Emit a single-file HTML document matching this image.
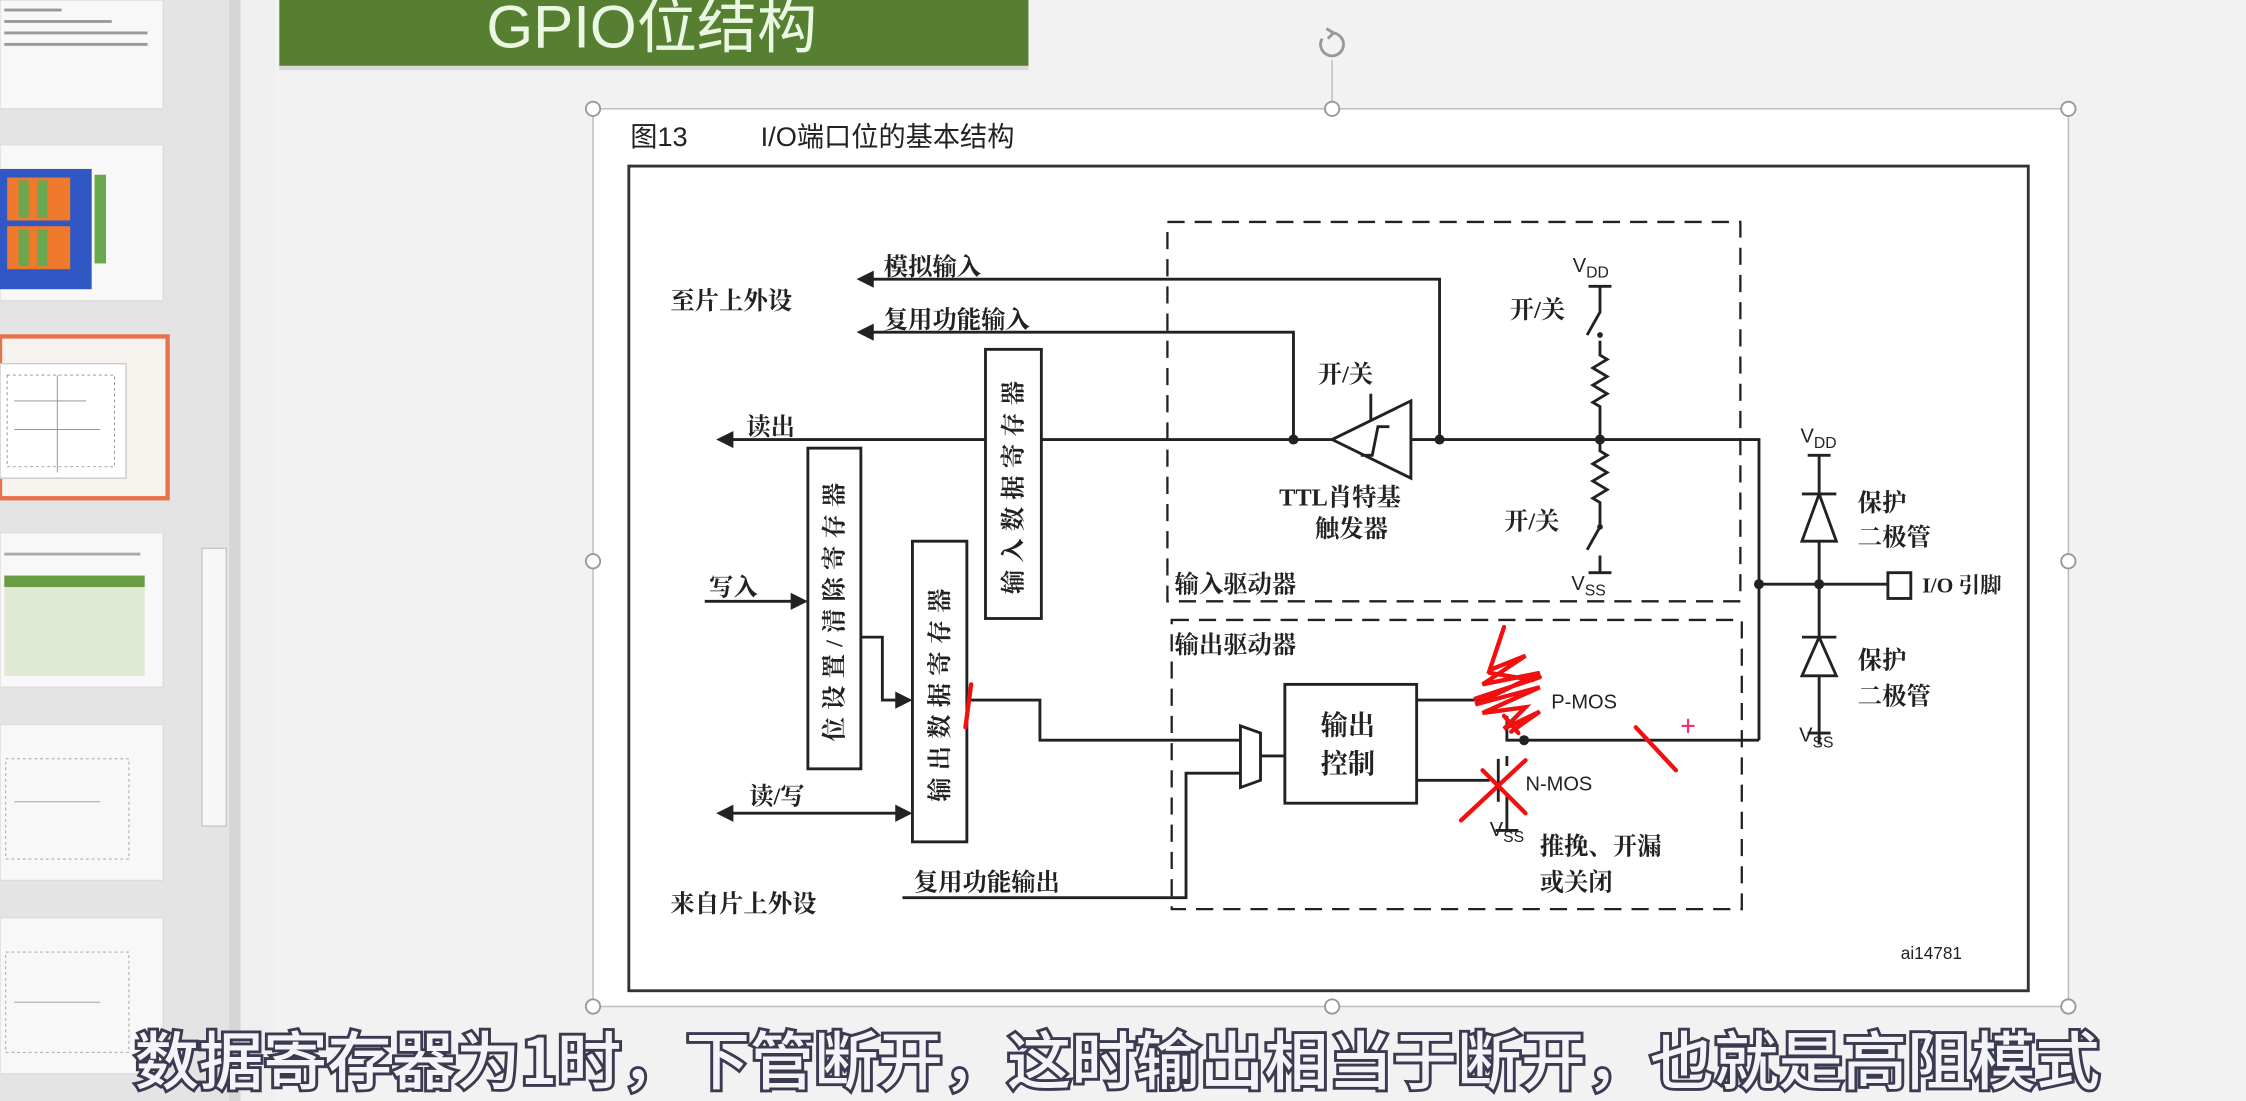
<!DOCTYPE html>
<html><head><meta charset="utf-8"><style>
html,body{margin:0;padding:0;width:2246px;height:1101px;overflow:hidden;background:#ececec}
svg{display:block}
.d{font-family:"Liberation Serif","Noto Serif CJK SC",serif;fill:#222}
.s{font-family:"Liberation Sans","Noto Sans CJK SC",sans-serif;fill:#222}
</style></head><body>
<svg width="2246" height="1101" viewBox="0 0 1568 769" preserveAspectRatio="none" xmlns="http://www.w3.org/2000/svg">
<rect x="0" y="0" width="165" height="769" fill="#e4e4e4"/>
<rect x="160" y="0" width="8" height="769" fill="#d6d6d6"/>
<rect x="141" y="383" width="17" height="194" fill="#f7f7f7" stroke="#c8c8c8"/>
<rect x="0" y="0" width="114" height="76" fill="#f8f8f8" stroke="#ddd"/>
<g fill="#999"><rect x="3" y="6" width="40" height="2"/><rect x="3" y="14" width="75" height="2"/><rect x="3" y="22" width="100" height="2"/><rect x="3" y="30" width="100" height="2"/></g>
<rect x="0" y="101" width="114" height="109" fill="#f8f8f8" stroke="#ddd"/>
<rect x="0" y="118" width="64" height="84" fill="#2f58c4"/>
<rect x="5" y="124" width="44" height="30" fill="#f07a2c"/><rect x="5" y="158" width="44" height="30" fill="#f07a2c"/>
<g fill="#6aa84f"><rect x="13" y="126" width="7" height="26"/><rect x="26" y="126" width="7" height="26"/><rect x="13" y="160" width="7" height="26"/><rect x="26" y="160" width="7" height="26"/><rect x="66" y="122" width="8" height="62"/></g>
<rect x="0" y="235" width="117" height="113" fill="#f6f2ee" stroke="#e8704a" stroke-width="3"/>
<rect x="0" y="254" width="88" height="80" fill="#fff" stroke="#ccc"/>
<g stroke="#888" stroke-width="0.6" fill="none"><path d="M5 262H80V326H5Z" stroke-dasharray="2 2"/><path d="M10 280H60M10 300H70M40 262V330"/></g>
<rect x="0" y="372" width="114" height="108" fill="#f8f8f8" stroke="#ddd"/>
<rect x="3" y="402" width="98" height="70" fill="#dfe9d3"/><rect x="3" y="402" width="98" height="8" fill="#6a9c44"/>
<g fill="#aaa"><rect x="3" y="386" width="95" height="2"/></g>
<rect x="0" y="506" width="114" height="109" fill="#f8f8f8" stroke="#ddd"/>
<g stroke="#999" stroke-width="0.6" fill="none"><path d="M4 530H90V600H4Z" stroke-dasharray="2 2"/><path d="M10 560H70"/></g>
<rect x="0" y="641" width="114" height="109" fill="#f8f8f8" stroke="#ddd"/>
<g stroke="#999" stroke-width="0.6" fill="none"><path d="M4 665H90V735H4Z" stroke-dasharray="2 2"/><path d="M10 700H70"/></g>
<rect x="168" y="0" width="1400" height="769" fill="#efefef"/>
<rect x="192" y="0" width="1376" height="769" fill="#f2f2f2"/>
<rect x="195" y="0" width="523" height="46" fill="#577f32"/>
<rect x="195" y="46" width="523" height="3" fill="#d8d8d8"/>
<text x="455" y="33" text-anchor="middle" style="font-family:'Liberation Sans','Noto Sans CJK SC',sans-serif;font-size:42px;fill:#eaf7e2">GPIO位结构</text>
<rect x="414" y="76" width="1030" height="627" fill="#fff" stroke="#bbb" stroke-width="1"/>
<line x1="930" y1="42" x2="930" y2="76" stroke="#bbb"/>
<g fill="#fff" stroke="#999" stroke-width="1.3"><circle cx="414" cy="76" r="5"/><circle cx="930" cy="76" r="5"/><circle cx="1444" cy="76" r="5"/><circle cx="414" cy="392" r="5"/><circle cx="1444" cy="392" r="5"/><circle cx="414" cy="703" r="5"/><circle cx="930" cy="703" r="5"/><circle cx="1444" cy="703" r="5"/></g>
<path d="M923 27a8 8 0 1 0 7-4" fill="none" stroke="#999" stroke-width="2"/><path d="M926 20l5 3-4 4" fill="none" stroke="#999" stroke-width="2"/>
<text x="440" y="102" class="s" style="font-size:19px">图13</text>
<text x="531" y="102" class="s" style="font-size:19px">I/O端口位的基本结构</text>
<rect x="439" y="116" width="977" height="576" fill="#fff" stroke="#333" stroke-width="2"/>
<g stroke="#222" stroke-width="2" fill="none">
<rect x="815" y="155" width="400" height="265" stroke-dasharray="12 7" stroke-width="1.6"/>
<rect x="818" y="433" width="398" height="202" stroke-dasharray="12 7" stroke-width="1.6"/>
<path d="M608 195H1005V307M608 232H903V307M510 307H930M985 307H1228V517"/>
<path d="M492 420H555M601 445H616V489H628M675 489H726V517H866M510 568H628M630 627H828V540H866"/>
<path d="M880 528H897"/>
<path d="M989 489H1040M989 545H1040M1064 517H1228"/>
<path d="M1052 500V517H1064M1052 528V535M1046 530V560M1052 555V580M1044 580H1060"/>
<path d="M1228 408H1318M1270 318V520"/>
<path d="M1262 318H1278M1262 512H1278"/>
<path d="M1109 200H1125M1117 200V218L1108 234M1117 238V248l5 3-10 6 10 6-10 6 10 6-10 6 5 3V307"/>
<path d="M1117 307V315l5 3-10 6 10 6-10 6 10 6-10 6 5 3V368M1117 368L1108 384M1117 388V400M1109 400H1125"/>
</g>
<g fill="#222"><circle cx="1117" cy="234" r="2"/><circle cx="1117" cy="368" r="2"/></g>
<g fill="#fff" stroke="#222" stroke-width="2">
<rect x="688" y="244" width="39" height="188"/>
<rect x="564" y="313" width="37" height="224"/>
<rect x="637" y="378" width="38" height="210"/>
<rect x="897" y="478" width="92" height="83"/>
<path d="M866 507L880 512V545L866 550Z"/>
<path d="M985 280V334L930 307Z"/>
<rect x="1318" y="400" width="16" height="18"/>
<path d="M1270 345L1258 378H1282Z"/><path d="M1270 445L1258 472H1282Z"/>
</g>
<g stroke="#222" stroke-width="2"><path d="M1258 345H1282M1258 445H1282M957 275V293"/><path d="M950 318h8l4-20h8" fill="none"/></g>
<g fill="#222">
<path d="M598 195l12-6v12zM598 232l12-6v12zM500 307l12-6v12zM564 420l-12-6v12zM637 489l-12-6v12zM500 568l12-6v12zM637 568l-12-6v12z"/>
<circle cx="903" cy="307" r="3.5"/><circle cx="1005" cy="307" r="3.5"/><circle cx="1117" cy="307" r="3.5"/><circle cx="1228" cy="408" r="3.5"/><circle cx="1270" cy="408" r="3.5"/><circle cx="1064" cy="517" r="3.5"/>
</g>
<g class="d" style="font-size:17px;font-weight:bold">
<text x="468" y="216">至片上外设</text>
<text x="617" y="192">模拟输入</text>
<text x="617" y="229">复用功能输入</text>
<text x="521" y="304">读出</text>
<text x="495" y="416">写入</text>
<text x="523" y="562">读/写</text>
<text x="468" y="637">来自片上外设</text>
<text x="638" y="622">复用功能输出</text>
<text x="920" y="267">开/关</text>
<text x="893" y="353">TTL肖特基</text>
<text x="918" y="375">触发器</text>
<text x="1054" y="222">开/关</text>
<text x="1050" y="370">开/关</text>
<text x="820" y="414">输入驱动器</text>
<text x="820" y="456">输出驱动器</text>
<text x="1075" y="597">推挽、开漏</text>
<text x="1075" y="622">或关闭</text>
<text x="1297" y="357">保护</text><text x="1297" y="381">二极管</text>
<text x="1297" y="467">保护</text><text x="1297" y="492">二极管</text>
<text x="1342" y="414" style="font-size:15px">I/O 引脚</text>
<text x="922" y="513" style="font-size:19px">输出</text>
<text x="922" y="540" style="font-size:19px">控制</text>
</g>
<g class="d" style="font-size:17px;font-weight:bold;letter-spacing:5px" text-anchor="middle">
<text transform="translate(713 338) rotate(-90)">输入数据寄存器</text>
<text transform="translate(588 425) rotate(-90)">位设置/清除寄存器</text>
<text transform="translate(662 483) rotate(-90)">输出数据寄存器</text>
</g>
<g class="s" style="font-size:14px">
<text x="1098" y="190">V<tspan dy="4" font-size="11">DD</tspan></text>
<text x="1097" y="412">V<tspan dy="4" font-size="11">SS</tspan></text>
<text x="1257" y="309">V<tspan dy="4" font-size="11">DD</tspan></text>
<text x="1256" y="518">V<tspan dy="4" font-size="11">SS</tspan></text>
<text x="1040" y="584">V<tspan dy="4" font-size="11">SS</tspan></text>
<text x="1083" y="495">P-MOS</text>
<text x="1065" y="552">N-MOS</text>
<text x="1327" y="670" style="font-size:12px">ai14781</text>
</g>
<g stroke="#f01010" stroke-width="3" fill="none" stroke-linecap="round">
<path d="M1050 438l-10 30 25-10-30 20 40-8-45 22 45-12-40 18 30-4-15 15 25-12-20 14M1040 470l30 5M1030 488l45-15M1050 500l10 12"/>
<path d="M1020 573l45-42M1035 538l30 30"/>
<path d="M1142 508l28 30"/>
<path d="M678 478l-4 30"/>
</g>
<path d="M1174 507h9M1178.5 502v10" stroke="#ff2a6a" stroke-width="1.5"/>
<text x="780" y="757" text-anchor="middle" style="font-family:'Noto Sans CJK SC','WenQuanYi Zen Hei',sans-serif;font-weight:500;font-size:44px;fill:#f4f4f8;stroke:#3a3a50;stroke-width:4;paint-order:stroke" textLength="1372" lengthAdjust="spacingAndGlyphs">数据寄存器为1时，下管断开，这时输出相当于断开，也就是高阻模式</text>
</svg>
</body></html>
